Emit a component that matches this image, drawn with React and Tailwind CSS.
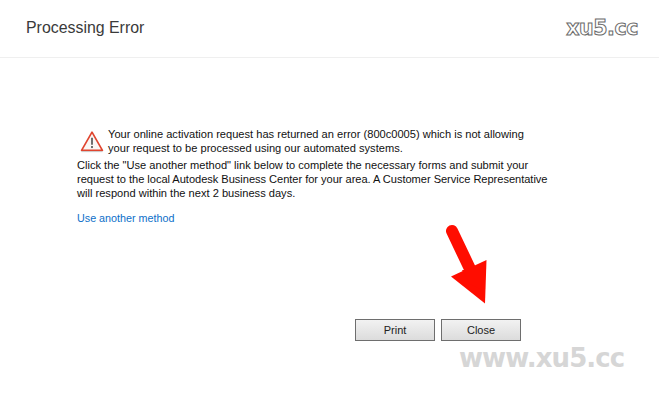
import React from 'react';

const font = 'font-["Liberation_Sans",Arial,sans-serif]';

const ActionButton = ({ label }) => (
  <button className="w-[80px] h-[22px] border border-[#6e6e6e] bg-gradient-to-b from-[#f2f2f2] to-[#dcdcdc] text-[11px] text-[#222] leading-none">
    {label}
  </button>
);

const WarningIcon = () => (
  <svg width="24" height="23" viewBox="0 0 23 22" className="shrink-0 ml-[3px]">
    <path d="M11.5 2 L21.5 19.5 H1.5 Z" fill="#fbf7f5" stroke="#e0452f" strokeWidth="1.6" strokeLinejoin="round" />
    <path d="M1.5 20.7 H21.5" stroke="#c9c9c9" strokeWidth="1" />
    <path d="M11.5 7.5 V14" stroke="#666" strokeWidth="1.8" />
    <rect x="10.6" y="15.3" width="1.8" height="2" fill="#666" />
  </svg>
);

const App = () => (
  <div className={`relative w-[659px] h-[401px] bg-white overflow-hidden ${font}`}>
    <header className="h-[58px] border-b border-[#efefef] flex items-center justify-between pl-[26px] pr-[21px] pb-[1px]">
      <h1 className="text-[15.9px] text-[#3a3a3a] leading-none">Processing Error</h1>
      <span className="font-['DejaVu_Sans',sans-serif] font-bold text-[20.5px] tracking-[-0.4px] leading-none text-white [-webkit-text-stroke:1px_#6b6b6b]">
        xu5.cc
      </span>
    </header>

    <main className="pl-[77px] pt-[69px] w-[560px] text-[11.1px] leading-[14px] text-[#111]">
      <div className="flex items-center gap-[4px]">
        <WarningIcon />
        <p>
          Your online activation request has returned an error (800c0005) which is not allowing
          <br />
          your request to be processed using our automated systems.
        </p>
      </div>
      <p className="mt-[3px]">
        Click the "Use another method" link below to complete the necessary forms and submit your
        <br />
        <span className="tracking-[-0.04px]">
          request to the local Autodesk Business Center for your area. A Customer Service Representative
        </span>
        <br />
        will respond within the next 2 business days.
      </p>
      <a className="block mt-[11px] text-[10.75px] text-[#0d6fc9]" href="#">Use another method</a>
    </main>

    <div className="flex justify-end gap-[6px] pr-[138px] pt-[94px]">
      <ActionButton label="Print" />
      <ActionButton label="Close" />
    </div>

    {/* red arrow drawn over the page */}
    <svg className="absolute left-[440px] top-[220px]" width="55" height="90" viewBox="0 0 55 90">
      <path d="M12 11 L31 51" stroke="#ff0d00" strokeWidth="12" strokeLinecap="round" />
      <path d="M11 56.5 L46.5 40 L45 83.5 Z" fill="#ff0d00" />
      <path d="M22 50 L40 50 L42 70 L30 64 Z" fill="#ff0d00" />
    </svg>

    {/* watermark */}
    <span className="absolute left-[459px] top-[343px] font-['DejaVu_Sans',sans-serif] font-bold text-[26px] leading-[30px] tracking-[-0.9px] text-[#d6d6d6]">
      www.xu5.cc
    </span>
  </div>
);

export default App;
